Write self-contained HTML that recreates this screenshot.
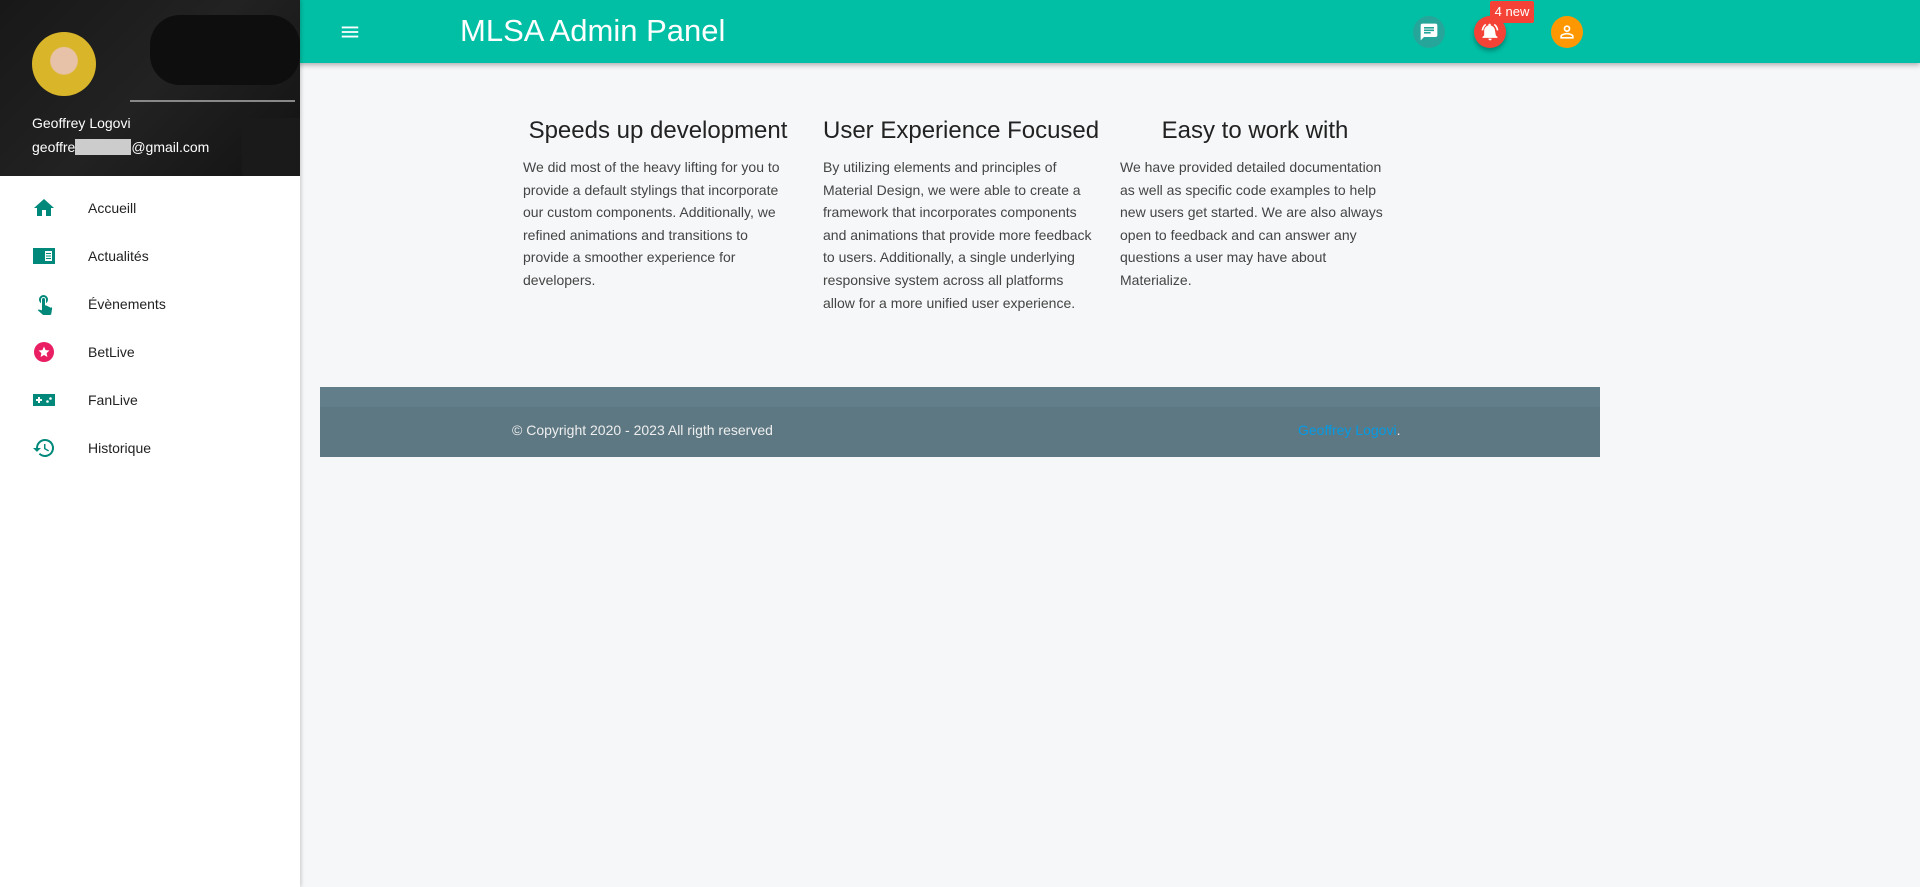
<!DOCTYPE html>
<html><head><meta charset="utf-8"><style>
*{margin:0;padding:0;box-sizing:border-box}
body{width:1920px;height:887px;background:#f6f7f9;font-family:"Liberation Sans",sans-serif;overflow:hidden;position:relative}
.top{position:absolute;left:0;top:0;width:1920px;height:63px;background:#00bfa5;box-shadow:0 2px 5px rgba(0,0,0,.3);z-index:1}
.side{position:absolute;left:0;top:0;width:300px;height:887px;background:#fff;box-shadow:1px 0 4px rgba(0,0,0,.2);z-index:2}
.hdr{height:176px;background:linear-gradient(135deg,#181818,#222 50%,#121212);position:relative;overflow:hidden}
.spk{position:absolute;left:150px;top:15px;width:150px;height:70px;background:#0e0e0e;border-radius:30px}
.avatar{position:absolute;left:32px;top:32px;width:64px;height:64px;border-radius:50%;background:radial-gradient(circle at 50% 45%,#e8c2a8 0 28%,#d9b52a 30%)}
.name{position:absolute;left:32px;top:115px;color:#fff;font-size:14px}
.email{position:absolute;left:32px;top:139px;color:#fff;font-size:14px}
.item{position:absolute;left:0;height:48px;width:300px;display:flex;align-items:center}
.item svg{position:absolute;left:32px}
.item span{position:absolute;left:88px;font-size:14px;color:#222}
.col{position:absolute;top:117px;width:270px}
.col h4{font-weight:normal;font-size:24px;color:#222;text-align:center;margin-bottom:11px;white-space:nowrap}
.col p{font-size:14px;line-height:22.6px;color:#444}
.foot{position:absolute;left:320px;top:387px;width:1280px;height:70px;background:#5d7883}
.foot .band{height:20px;background:#617e8a}
</style></head><body>
<div class="top">
<svg style="position:absolute;left:339px;top:21px" width="22" height="22" viewBox="0 0 24 24"><path fill="#fff" d="M3 6h18v2H3zm0 5h18v2H3zm0 5h18v2H3z"/></svg>
<div style="position:absolute;left:460px;top:13px;color:#fff;font-size:31px">MLSA Admin Panel</div>
<div style="position:absolute;left:1413px;top:16px;width:32px;height:32px;border-radius:50%;background:#26a69a"></div>
<svg style="position:absolute;left:1419px;top:22px" width="20" height="20" viewBox="0 0 24 24"><path fill="#fff" d="M20 2H4c-1.1 0-2 .9-2 2v18l4-4h14c1.1 0 2-.9 2-2V4c0-1.1-.9-2-2-2zM6 9h12v2H6zm8 5H6v-2h8zm4-6H6V6h12z"/></svg>
<div style="position:absolute;left:1474px;top:16px;width:32px;height:32px;border-radius:50%;background:#f44336;box-shadow:0 3px 5px rgba(0,0,0,.3)"></div>
<svg style="position:absolute;left:1480px;top:22px" width="20" height="20" viewBox="0 0 24 24"><path fill="#fff" d="M7.6 3.6 6.2 2.2C3.8 4 2.2 6.8 2 10h2c.2-2.6 1.5-4.9 3.6-6.4zM20 10h2c-.2-3.2-1.7-6-4.2-7.8l-1.4 1.4c2 1.5 3.4 3.8 3.6 6.4zM18 10.5c0-3-2.1-5.6-5-6.3V3.5c0-.8-.7-1.5-1.5-1.5S10 2.7 10 3.5v.7c-2.9.7-5 3.3-5 6.3V16l-2 2v1h18v-1l-2-2zM12 22c.1 0 .3 0 .4 0 .7-.1 1.2-.6 1.4-1.2.1-.3.2-.5.2-.8h-4c0 1.1.9 2 2 2z"/></svg>
<div style="position:absolute;left:1490px;top:1px;width:44px;height:22px;background:#f44336;border-radius:2px;color:#fff;font-size:13px;text-align:center;line-height:22px">4 new</div>
<div style="position:absolute;left:1551px;top:16px;width:32px;height:32px;border-radius:50%;background:#ff9800"></div>
<svg style="position:absolute;left:1557px;top:22px" width="20" height="20" viewBox="0 0 24 24"><path fill="#fff" d="M12 4a4 4 0 1 0 0 8 4 4 0 0 0 0-8zm0 2a2 2 0 1 1 0 4 2 2 0 0 1 0-4zm0 7c-2.7 0-8 1.3-8 4v3h16v-3c0-2.7-5.3-4-8-4zm0 2c3 0 6 1.5 6 2v1H6v-1c0-.6 3-2 6-2z"/></svg>
</div>
<div class="side">
<div class="hdr"><div class="spk"></div>
<div style="position:absolute;left:130px;top:100px;width:165px;height:2px;background:#888"></div>
<div style="position:absolute;left:242px;top:118px;width:70px;height:60px;background:#1a1a1a;border-radius:6px"></div>
<div class="avatar"></div>
<div class="name">Geoffrey Logovi</div>
<div class="email">geoffre<span style="background:#ccc;color:#ccc">xxxxxxxx</span>@gmail.com</div>
</div>
<div class="item" style="top:184px"><svg width="24" height="24" viewBox="0 0 24 24"><path fill="#00897b" d="M10 20v-6h4v6h5v-8h3L12 3 2 12h3v8z"/></svg><span>Accueill</span></div>
<div class="item" style="top:232px"><svg width="24" height="24" viewBox="0 0 24 24"><path fill="#00897b" d="M1 4h22v16H1z"/><path fill="#fff" d="M13 7h7v10h-7z"/><path fill="#00897b" d="M14 9h5v1h-5zm0 2.5h5v1h-5zm0 2.5h5v1h-5z"/></svg><span>Actualités</span></div>
<div class="item" style="top:280px"><svg width="24" height="24" viewBox="0 0 24 24"><path fill="#00897b" d="M9 11.2V7.5a2.5 2.5 0 0 1 5 0v3.7c1.2-.8 2-2.2 2-3.7a4.5 4.5 0 0 0-9 0c0 1.5.8 2.9 2 3.7zm9.8 4.6-4.5-2.3c-.2-.1-.3-.1-.5-.1H13v-6c0-.8-.7-1.5-1.5-1.5S10 6.7 10 7.5v10.7l-3.4-.7-.8.8L11.1 23h6.8c.8 0 1.3-.5 1.4-1.2l.8-5.3c.1-.6-.2-1.1-.7-1.3z"/></svg><span>Évènements</span></div>
<div class="item" style="top:328px"><svg width="24" height="24" viewBox="0 0 24 24"><circle cx="12" cy="12" r="10" fill="#e91e63"/><path fill="#fff" d="M12 6.5l1.6 3.6 3.9.4-2.9 2.6.8 3.9-3.4-2-3.4 2 .8-3.9-2.9-2.6 3.9-.4z"/></svg><span>BetLive</span></div>
<div class="item" style="top:376px"><svg width="24" height="24" viewBox="0 0 24 24"><path fill="#00897b" d="M1 6h22v12H1z"/><path fill="#fff" d="M4 11h2V9h2v2h2v2H8v2H6v-2H4z"/><circle cx="15.5" cy="13.5" r="1.3" fill="#fff"/><circle cx="18.5" cy="10.5" r="1.3" fill="#fff"/></svg><span>FanLive</span></div>
<div class="item" style="top:424px"><svg width="24" height="24" viewBox="0 0 24 24"><path fill="#00897b" d="M13 3a9 9 0 0 0-9 9H1l3.9 3.9L9 12H6a7 7 0 1 1 2.1 5L6.7 18.4A9 9 0 1 0 13 3zm-1 5v5l4.3 2.5.7-1.2-3.5-2.1V8z"/></svg><span>Historique</span></div>
</div>
<div class="col" style="left:523px"><h4>Speeds up development</h4><p>We did most of the heavy lifting for you to provide a default stylings that incorporate our custom components. Additionally, we refined animations and transitions to provide a smoother experience for developers.</p></div>
<div class="col" style="left:823px"><h4>User Experience Focused</h4><p>By utilizing elements and principles of Material Design, we were able to create a framework that incorporates components and animations that provide more feedback to users. Additionally, a single underlying responsive system across all platforms allow for a more unified user experience.</p></div>
<div class="col" style="left:1120px"><h4>Easy to work with</h4><p>We have provided detailed documentation as well as specific code examples to help new users get started. We are also always open to feedback and can answer any questions a user may have about Materialize.</p></div>
<div class="foot"><div class="band"></div>
<div style="position:absolute;left:192px;top:35px;color:#eee;font-size:14px">© Copyright 2020 - 2023 All rigth reserved</div>
<div style="position:absolute;left:978px;top:35px;color:#eee;font-size:14px"><span style="color:#039be5">Geoffrey Logovi</span>.</div>
</div>
</body></html>
